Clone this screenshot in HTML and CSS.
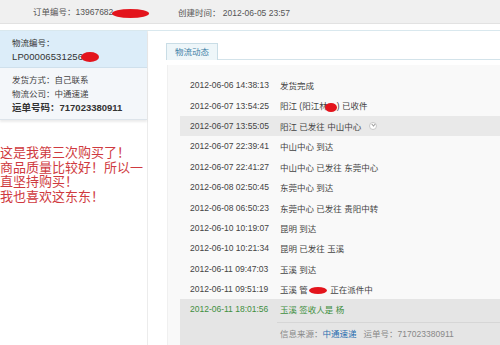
FILE: index.html
```html
<!DOCTYPE html>
<html lang="zh-CN">
<head>
    <meta charset="UTF-8">
    <title>物流动态</title>
    <link rel="stylesheet" href="styles.css">
</head>
<body>

<!-- Order header -->
<div class="topbar">
    <span class="order-no">订单编号：13967682<span class="blot blot-order"></span></span>
    <span class="created">创建时间： 2012-06-05 23:57</span>
</div>

<div class="main">
    <!-- Left column: shipment info + note -->
    <div class="side">
        <div class="card">
            <div class="card-head">
                <p>物流编号：</p>
                <p class="lp">LP00006531256<span class="blot blot-lp"></span></p>
            </div>
            <div class="card-body">
                <p>发货方式：自己联系</p>
                <p>物流公司：中通速递</p>
                <p class="waybill">运单号码：717023380911</p>
            </div>
        </div>
        <p class="note">这是我第三次购买了！<br>商品质量比较好！所以一<br>直坚持购买！<br>我也喜欢这东东！</p>
    </div>

    <!-- Right column: tracking list -->
    <div class="content">
        <div class="tabs">
            <span class="tab">物流动态</span>
        </div>
        <div class="track">
            <div class="row"><span class="time">2012-06-06 14:38:13</span><span>发货完成</span></div>
            <div class="row"><span class="time">2012-06-07 13:54:25</span><span>阳江 (阳江林<span class="blot blot-name"></span>) 已收件</span></div>
            <div class="row hover"><span class="time">2012-06-07 13:55:05</span><span>阳江 已发往 中山中心</span><span class="more"></span></div>
            <div class="row"><span class="time">2012-06-07 22:39:41</span><span>中山中心 到达</span></div>
            <div class="row"><span class="time">2012-06-07 22:41:27</span><span>中山中心 已发往 东莞中心</span></div>
            <div class="row"><span class="time">2012-06-08 02:50:45</span><span>东莞中心 到达</span></div>
            <div class="row"><span class="time">2012-06-08 06:50:23</span><span>东莞中心 已发往 贵阳中转</span></div>
            <div class="row"><span class="time">2012-06-10 10:19:07</span><span>昆明 到达</span></div>
            <div class="row"><span class="time">2012-06-10 10:21:34</span><span>昆明 已发往 玉溪</span></div>
            <div class="row"><span class="time">2012-06-11 09:47:03</span><span>玉溪 到达</span></div>
            <div class="row"><span class="time">2012-06-11 09:51:19</span><span>玉溪 管<span class="blot blot-courier"></span> 正在派件中</span></div>
            <div class="last">
                <div class="row done"><span class="time">2012-06-11 18:01:56</span><span>玉溪 签收人是 杨</span></div>
                <div class="source">信息来源：<span class="carrier">中通速递</span>&nbsp;&nbsp; 运单号：717023380911</div>
            </div>
        </div>
    </div>
</div>

</body>
</html>
```

FILE: styles.css
```css
/* Base */
body {
    margin: 0;
    width: 500px;
    height: 345px;
    overflow: hidden;
    background: #fff;
    color: #444;
    font-family: 'Liberation Sans', 'Noto Sans CJK SC', sans-serif;
    font-size: 8.5px;
}

p {
    margin: 0;
}

/* Red redaction marks */
.blot {
    display: inline-block;
    background: #e3141c;
    border-radius: 50%;
    vertical-align: middle;
}

.blot-order {
    width: 37px;
    height: 9px;
    margin-left: -1px;
}

.blot-lp {
    width: 18px;
    height: 10px;
    margin-left: -2px;
}

.blot-name {
    width: 12px;
    height: 9px;
    margin-left: -3px;
}

.blot-courier {
    width: 18px;
    height: 7px;
    margin: 0 1px;
}

/* Order header */
.topbar {
    height: 23px;
    background: #f0f0f0;
    border-bottom: 1px solid #e2e2e2;
    display: flex;
    align-items: center;
    padding-left: 33px;
    color: #555;
}

.order-no {
    width: 145px;
}

/* Main area */
.main {
    display: flex;
    margin-top: 6px;
    border-top: 1px solid #d9e8ee;
    height: 314px;
    overflow: hidden;
}

.side {
    width: 147px;
    border-right: 1px solid #ececec;
    flex-shrink: 0;
}

.card {
    box-shadow: 0 2px 2px rgba(0, 0, 0, 0.08);
    border-bottom: 1px solid #dde4ea;
}

.card-head {
    background: #dcedf9;
    padding: 6px 12px 4px;
    border-bottom: 1px solid #cfe0ec;
    line-height: 13px;
    color: #333;
}

.card-head .lp {
    font-size: 9.5px;
    letter-spacing: 0.1px;
}

.card-body {
    background: #f4f7fa;
    padding: 5px 12px 4px;
    line-height: 14px;
    color: #444;
}

.card-body .waybill {
    font-weight: bold;
    font-size: 9.5px;
    color: #333;
}

.note {
    margin-top: 26px;
    color: #cf3a40;
    font-size: 13px;
    line-height: 14.5px;
}

/* Tracking column */
.content {
    flex: 1;
    padding: 12px 0 0 18px;
}

.tabs {
    height: 16px;
    border-bottom: 1px solid #d3e3ea;
}

.tab {
    display: inline-block;
    width: 50px;
    height: 16px;
    line-height: 16px;
    text-align: center;
    background: #eef6f9;
    border: 1px solid #c9dde6;
    border-bottom: none;
    color: #3f7fa6;
}

.track {
    margin: 5px 0 0 1px;
    padding-top: 10px;
    background: #f9f9f9;
    border-left: 1px solid #f0f0f0;
    height: 270px;
}

.row {
    height: 20.4px;
    display: flex;
    align-items: center;
    margin-left: 12px;
    padding-left: 10px;
    color: #444;
}

.row .time {
    width: 90px;
    flex-shrink: 0;
}

.row.hover {
    background: #e9e9e9;
}

.more {
    width: 6px;
    height: 6px;
    margin-left: 8px;
    border: 1px solid #c8c8c8;
    border-radius: 50%;
    background: #fff;
    position: relative;
}

.more::after {
    content: '';
    position: absolute;
    left: 1.5px;
    top: 0.5px;
    width: 2px;
    height: 2px;
    border-right: 1px solid #999;
    border-bottom: 1px solid #999;
    transform: rotate(45deg);
}

.last {
    margin-left: 12px;
    background: #e5e5e5;
    height: 46px;
}

.last .row {
    margin-left: 0;
}

.row.done {
    color: #3f8f3f;
}

.source {
    margin: 2px 0 0 97px;
    padding: 4px 0 0 3px;
    border-top: 1px solid #d6d6d6;
    color: #888;
}

.carrier {
    color: #2a6fb0;
}
```
